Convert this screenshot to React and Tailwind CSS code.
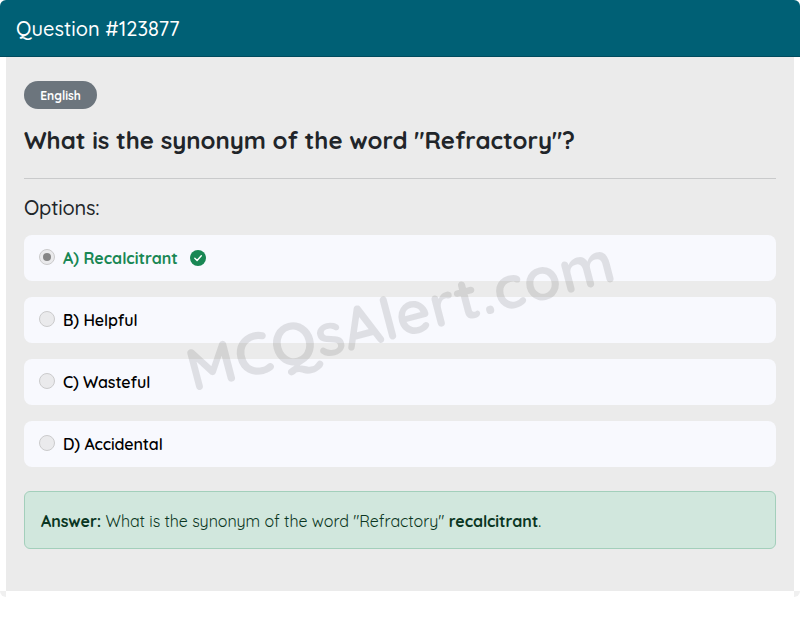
import React, { useState } from "react";

const options = [
  { key: "A", label: "Recalcitrant" },
  { key: "B", label: "Helpful" },
  { key: "C", label: "Wasteful" },
  { key: "D", label: "Accidental" },
];

const answer = "A";

function CheckIcon() {
  return (
    <svg viewBox="0 0 16 16" className="ml-3 size-4 shrink-0">
      <circle cx="8" cy="8" r="8" fill="#198754"/>
      <path d="M4.8 8.2 7.1 10.5 11.3 5.7" fill="none" stroke="#fff" strokeWidth="1.4" strokeLinecap="round" strokeLinejoin="round"/>
    </svg>
  );
}

function Radio({checked}) {
  return (
    <span className="mb-[3px] flex size-4 shrink-0 items-center justify-center rounded-full border border-[#cbcbcc] bg-[#eaeaec]">
      {checked ? <span className="size-2 rounded-full bg-[#858585]"/> : null}
    </span>
  );
}

function Option({option, checked}) {
  return (
    <li className="flex h-[46px] items-center rounded-lg bg-[#f8f9fe] pl-[15px]">
      <Radio checked={checked}/>
      <span className={`ml-2 whitespace-nowrap text-base ${checked ? "font-bold text-[#198754]" : "font-semibold tracking-[-0.12px] text-black"}`}>
        {option.key}) {option.label}
      </span>
      {checked ? <CheckIcon/> : null}
    </li>
  );
}

export default function App() {
  const [selected] = useState(answer);

  return (
    <div className="h-[621px] w-[800px] overflow-hidden bg-white font-[Quicksand,Lato,sans-serif] text-[#212529]">
      <header className="flex h-[57px] items-center rounded-t-md border-b border-[#004b5e] bg-[#006075] px-4 pt-px">
        <h1 className="whitespace-nowrap text-xl font-medium tracking-[0.04px] text-white">Question #123877</h1>
      </header>

      <main className="relative mx-[6px] h-[534px] bg-[#ebebeb] px-[18px] pt-6">
        <span className="flex h-7 w-[73px] items-center justify-center rounded-full bg-[#6c757d] pt-[2px] text-xs font-bold text-white">
          English
        </span>
        <h2 className="mt-4 whitespace-nowrap text-2xl leading-[30px] font-bold tracking-[-0.03px]">
          What is the synonym of the word "Refractory"?
        </h2>
        <hr className="mt-[23px] border-[#c9cacb]"/>
        <h3 className="mt-[17px] text-xl leading-6 font-medium tracking-[-0.2px]">Options:</h3>

        <ul className="mt-[15px] flex flex-col gap-4">
          {options.map((option) => (
            <Option key={option.key} option={option} checked={option.key === selected}/>
          ))}
        </ul>

        <div className="mt-6 flex h-[58px] items-center rounded-md border border-[#a3cfbb] bg-[#d1e7dd] px-4 pt-px text-[#0a3622]">
          <p className="whitespace-nowrap text-base tracking-[-0.05px]">
            <strong>Answer:</strong> What is the synonym of the word "Refractory" <strong>recalcitrant</strong>.
          </p>
        </div>

        <div className="pointer-events-none absolute top-[258px] left-[394px] -translate-x-1/2 -translate-y-1/2 rotate-[-14.7deg] whitespace-nowrap text-[60px] leading-none font-bold text-black/10">
          MCQsAlert.com
        </div>
      </main>

      <div className="flex justify-between">
        <span className="size-[6px] rounded-bl-md bg-[#f0f0f0]"/>
        <span className="size-[6px] rounded-br-md bg-[#f0f0f0]"/>
      </div>
    </div>
  );
}
